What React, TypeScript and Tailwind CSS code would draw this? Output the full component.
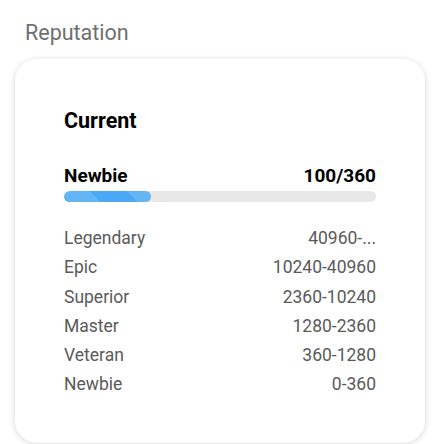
const tiers = [
  ["Legendary", "40960-..."],
  ["Epic", "10240-40960"],
  ["Superior", "2360-10240"],
  ["Master", "1280-2360"],
  ["Veteran", "360-1280"],
  ["Newbie", "0-360"],
];

export default function App() {
  const current = 100;
  const max = 360;
  const pct = (current / max) * 100;

  return (
    <div className="min-h-screen bg-white pl-[15px] pr-[8px] pt-[20px] font-['Roboto',sans-serif]">
      <h2 className="ml-[10px] text-[21.5px] leading-[26px] text-[#6f6f6f]">Reputation</h2>

      <div className="mt-[13px] rounded-[22px] bg-white px-[49px] pt-[48px] pb-[43px] shadow-[0_1px_6px_rgba(0,0,0,0.16)]">
        <h3 className="text-[21.5px] font-bold leading-[28px] text-black">Current</h3>

        <div className="mt-[30px] flex items-center justify-between text-[19px] font-bold leading-[22px] text-black">
          <span>Newbie</span>
          <span>100/360</span>
        </div>

        <div className="mt-[4px] h-[11px] w-full overflow-hidden rounded-full bg-[#e8e8e8]">
          <div
            className="h-full rounded-full bg-[repeating-linear-gradient(45deg,#4aa8f5_0px,#4aa8f5_4px,#64b5f6_4px,#64b5f6_26px,#4aa8f5_26px,#4aa8f5_48px)]"
            style={{ width: `${pct}%` }}
          />
        </div>

        <div className="mt-[22px] flex flex-col">
          {tiers.map(([name, range]) => (
            <div key={name} className="flex justify-between text-[17.5px] leading-[29.3px] text-[#5a5a5a]">
              <span>{name}</span>
              <span>{range}</span>
            </div>
          ))}
        </div>
      </div>
    </div>
  );
}
